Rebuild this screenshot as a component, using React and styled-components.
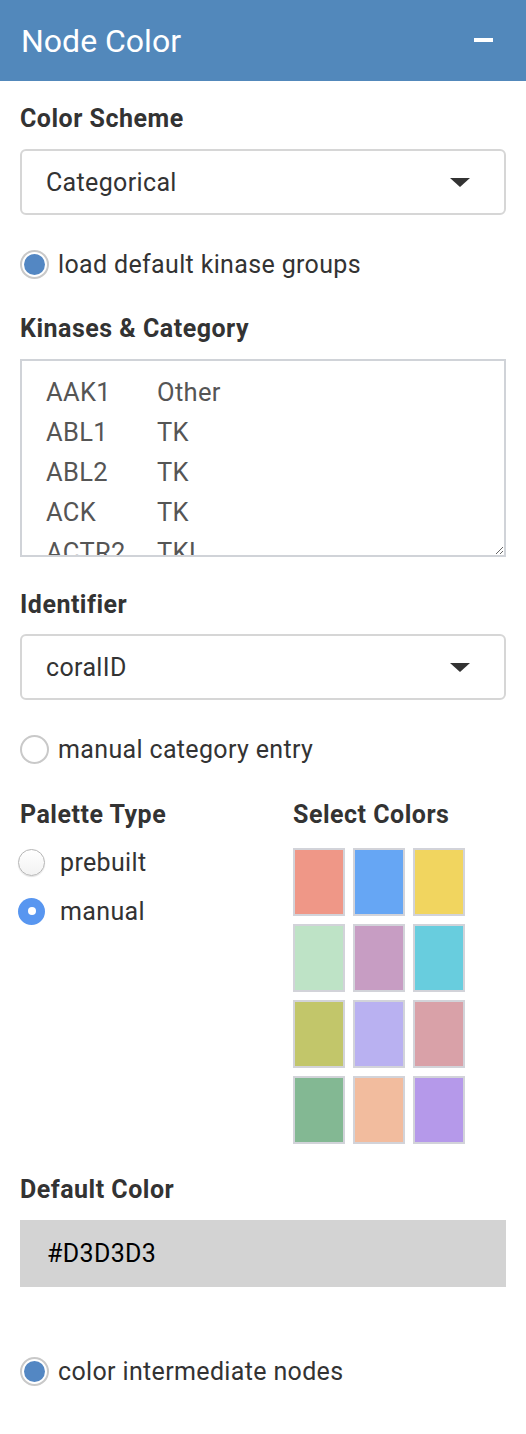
import React from "react";
import styled, { createGlobalStyle } from "styled-components";

const Global = createGlobalStyle`
  html, body { margin: 0; padding: 0; background: #fff; }
  body { font-family: Roboto, "Liberation Sans", Arial, sans-serif; color: #333; }
  * { box-sizing: border-box; }
`;

const Panel = styled.div`
  width: 526px;
  min-height: 1434px;
  background: #fff;
`;

const Header = styled.div`
  height: 81px;
  background: #5288bb;
  display: flex;
  align-items: center;
  justify-content: space-between;
  padding: 0 33px 0 21px;
  color: #fff;
`;

const Title = styled.h1`
  margin: 0;
  font-size: 32px;
  font-weight: 400;
  line-height: 40px;
`;

const Minus = styled.span`
  display: block;
  width: 19px;
  height: 4px;
  background: #fff;
  margin-top: -2px;
`;

const Body = styled.div`
  padding: 0 20px;
  display: flex;
  flex-direction: column;
`;

const Label = styled.div`
  font-size: 25px;
  font-weight: 700;
  letter-spacing: 0.5px;
  line-height: 30px;
  color: #333;
  margin-top: ${(p) => p.$mt || 0}px;
`;

const SelectBox = styled.div`
  margin-top: ${(p) => p.$mt || 0}px;
  height: 66px;
  border: 2px solid #d6d6d6;
  border-radius: 6px;
  display: flex;
  align-items: center;
  justify-content: space-between;
  padding: 0 34px 0 24px;
  font-size: 25px;
  letter-spacing: 0.35px;
  color: #333;
`;

const Caret = styled.span`
  width: 0;
  height: 0;
  border-left: 10px solid transparent;
  border-right: 10px solid transparent;
  border-top: 9px solid #333;
`;

const RadioRow = styled.label`
  margin-top: ${(p) => p.$mt || 0}px;
  display: flex;
  align-items: center;
  height: 30px;
  font-size: 25px;
  letter-spacing: 0.35px;
  color: #333;
  gap: ${(p) => (p.$gap != null ? p.$gap : 9)}px;
`;

const Circle = styled.span`
  flex: none;
  width: ${(p) => p.$size || 29}px;
  height: ${(p) => p.$size || 29}px;
  border-radius: 50%;
  display: flex;
  align-items: center;
  justify-content: center;
  margin-left: ${(p) => p.$ml || 0}px;
  ${(p) =>
    p.$variant === "filled"
      ? `background: #5896f0; border: none;`
      : p.$variant === "checked"
      ? `background: #fff; border: 2px solid #c9c9c9;`
      : p.$variant === "native"
      ? `background: linear-gradient(#fff, #f2f2f2); border: 1.5px solid #b5b5b5; box-shadow: 0 1px 1px rgba(0,0,0,0.12);`
      : `background: #fff; border: 2px solid #c9c9c9;`}
`;

const Dot = styled.span`
  width: ${(p) => p.$size}px;
  height: ${(p) => p.$size}px;
  border-radius: 50%;
  background: ${(p) => p.$color};
`;

const TextArea = styled.textarea`
  margin-top: 15px;
  display: block;
  width: 486px;
  height: 198px;
  border: 2px solid #d0d3d8;
  border-radius: 0;
  padding: 11px 24px 0 24px;
  font-family: Roboto, "Liberation Sans", Arial, sans-serif;
  font-size: 25.5px;
  letter-spacing: 0.35px;
  line-height: 40px;
  color: #555;
  tab-size: 111px;
  -moz-tab-size: 111px;
  resize: vertical;
  overflow: hidden;
  outline: none;
  white-space: pre;
`;

const Columns = styled.div`
  margin-top: 36px;
  display: grid;
  grid-template-columns: 273px 1fr;
`;

const Col = styled.div`
  display: flex;
  flex-direction: column;
`;

const Swatches = styled.div`
  margin-top: 18px;
  display: grid;
  grid-template-columns: repeat(3, 52px);
  grid-auto-rows: 68px;
  gap: 8px;
`;

const Swatch = styled.div`
  border: 2px solid #d2d3d9;
  background: ${(p) => p.$c};
`;

const ColorInput = styled.div`
  margin-top: 15px;
  height: 67px;
  background: #d3d3d3;
  display: flex;
  align-items: center;
  padding-left: 27px;
  font-size: 25px;
  letter-spacing: 0.35px;
  color: #000;
`;

const colors = [
  "#ef9787", "#66a6f4", "#f1d55f",
  "#bee3c6", "#c79dc3", "#68cdde",
  "#c2c66a", "#b9b1f1", "#d9a1a8",
  "#83b893", "#f2bc9e", "#b599ea",
];

const kinases = "AAK1\tOther\nABL1\tTK\nABL2\tTK\nACK\tTK\nACTR2\tTKL\nACTR2B\tTKL";

export default function App() {
  return (
    <>
      <Global />
      <Panel>
        <Header>
          <Title>Node Color</Title>
          <Minus />
        </Header>
        <Body>
          <Label $mt={23}>Color Scheme</Label>
          <SelectBox $mt={15}>
            <span>Categorical</span>
            <Caret />
          </SelectBox>
          <RadioRow $mt={34}>
            <Circle $variant="checked">
              <Dot $size={21} $color="#5387c3" />
            </Circle>
            load default kinase groups
          </RadioRow>
          <Label $mt={35}>Kinases &amp; Category</Label>
          <TextArea defaultValue={kinases} spellCheck={false} />
          <Label $mt={33}>Identifier</Label>
          <SelectBox $mt={14}>
            <span>coralID</span>
            <Caret />
          </SelectBox>
          <RadioRow $mt={34}>
            <Circle />
            manual category entry
          </RadioRow>
          <Columns>
            <Col>
              <Label>Palette Type</Label>
              <RadioRow $mt={17} $gap={15}>
                <Circle $variant="native" $size={27} $ml={-2} />
                prebuilt
              </RadioRow>
              <RadioRow $mt={19} $gap={15}>
                <Circle $variant="filled" $size={27} $ml={-2}>
                  <Dot $size={8} $color="#fff" />
                </Circle>
                manual
              </RadioRow>
            </Col>
            <Col>
              <Label>Select Colors</Label>
              <Swatches>
                {colors.map((c) => (
                  <Swatch key={c} $c={c} />
                ))}
              </Swatches>
            </Col>
          </Columns>
          <Label $mt={31}>Default Color</Label>
          <ColorInput>#D3D3D3</ColorInput>
          <RadioRow $mt={69}>
            <Circle $variant="checked">
              <Dot $size={21} $color="#5387c3" />
            </Circle>
            color intermediate nodes
          </RadioRow>
        </Body>
      </Panel>
    </>
  );
}
